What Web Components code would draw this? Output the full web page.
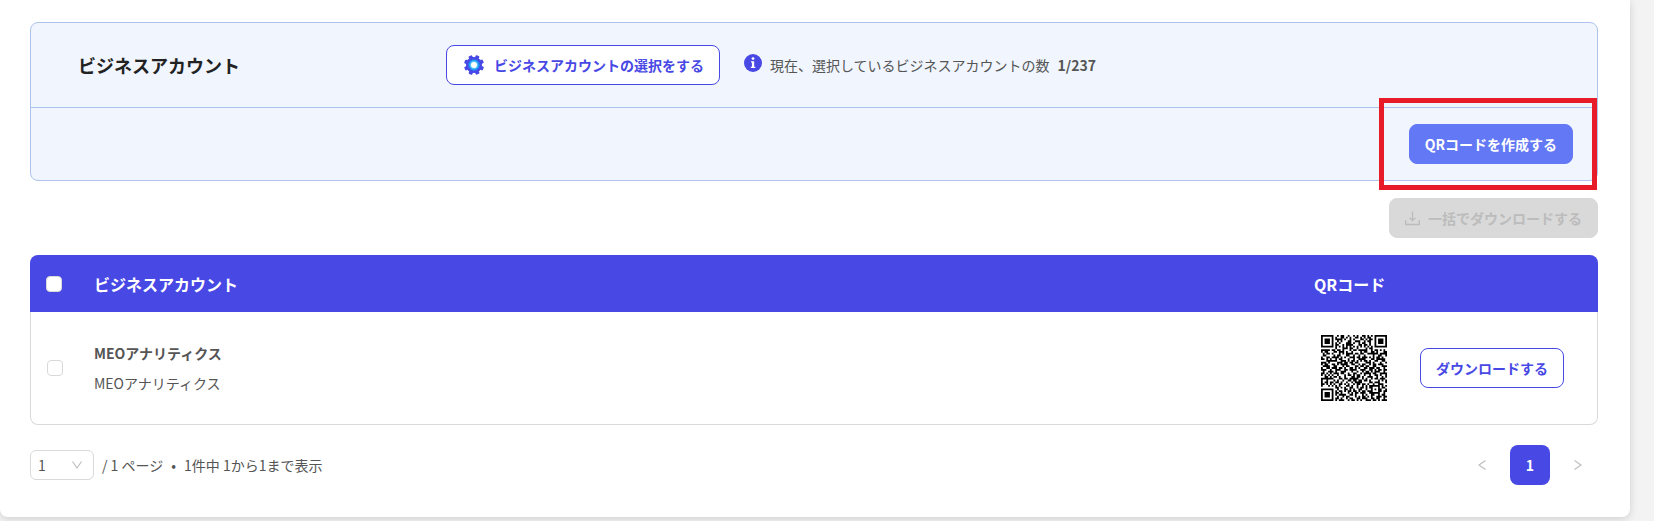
<!DOCTYPE html>
<html lang="ja">
<head>
<meta charset="utf-8">
<meta name="viewport" content="width=device-width, initial-scale=1">
<title>QRコード</title>
<style>
  :root {
    --primary: #4848e5;
    --primary-light: #6378f5;
    --panel: #f0f5fe;
    --panel-border: #adc3ec;
    --line: #d9d9d9;
    --text: #555;
    --heading: #222;
  }

  body {
    margin: 0;
    background: #f3f3f3;
    color: var(--text);
    font: 14px/22px "Noto Sans CJK JP", sans-serif;
  }
</style>
</head>
<body>
<qr-page></qr-page>

<script>
class AppButton extends HTMLElement {
  constructor() {
    super();
    this.attachShadow({ mode: "open" });
  }

  static get styles() {
    return /* css */`
      :host {
        display: inline-block;
      }

      button {
        display: flex;
        align-items: center;
        gap: 8px;
        height: 40px;
        padding: 0 15px;
        border: 1px solid var(--primary);
        border-radius: 8px;
        background: #fff;
        color: var(--primary);
        font: inherit;
        font-weight: 700;
        white-space: nowrap;
        cursor: pointer;
      }

      :host([kind="primary"]) button {
        border-color: var(--primary-light);
        background: var(--primary-light);
        color: #fff;
      }

      button:disabled {
        border-color: #d9d9d9;
        background: #d9d9d9;
        color: #bcbcbc;
        cursor: not-allowed;
      }
    `;
  }

  connectedCallback() {
    this.render();
    this.shadowRoot.querySelector("button").disabled = this.hasAttribute("disabled");
  }

  render() {
    this.shadowRoot.innerHTML = /* html */`
    <style>${AppButton.styles}</style>
    <button type="button"><slot name="icon"></slot><slot></slot></button>`;
  }
}

class AccountPanel extends HTMLElement {
  constructor() {
    super();
    this.attachShadow({ mode: "open" });
  }

  static get styles() {
    return /* css */`
      :host {
        display: block;
        border: 1px solid var(--panel-border);
        border-radius: 8px;
        background: var(--panel);
      }

      .top {
        display: grid;
        grid-template-columns: 368px 1fr;
        align-items: center;
        padding: 22px 24px 22px 47px;
      }

      h2 {
        margin: 0;
        color: var(--heading);
        font-size: 18px;
        font-weight: 700;
      }

      .choice {
        display: flex;
        align-items: center;
        gap: 24px;
      }

      .count {
        display: flex;
        align-items: center;
        gap: 8px;
      }

      .info {
        margin-bottom: 4px;
      }

      svg {
        display: block;
      }

      .actions {
        position: relative;
        display: flex;
        justify-content: flex-end;
        padding: 16px 24px;
        border-top: 1px solid var(--panel-border);
      }

      .mark {
        position: absolute;
        inset: -10px 0 -10px auto;
        width: 218px;
        box-sizing: border-box;
        border: 5px solid #e81c28;
        pointer-events: none;
      }
    `;
  }

  connectedCallback() {
    this.render();
  }

  render() {
    this.shadowRoot.innerHTML = /* html */`
    <style>${AccountPanel.styles}</style>
    <div class="top">
      <h2>ビジネスアカウント</h2>
      <div class="choice">
        <app-button>
          <svg slot="icon" width="24" height="24" viewBox="0 0 24 24" aria-hidden="true">
            <g fill="#4848e5">
              <circle cx="12" cy="12" r="8"/>
              <rect x="10" y="2" width="4" height="20" rx="1" transform="rotate(22 12 12)"/>
              <rect x="10" y="2" width="4" height="20" rx="1" transform="rotate(67 12 12)"/>
              <rect x="10" y="2" width="4" height="20" rx="1" transform="rotate(112 12 12)"/>
              <rect x="10" y="2" width="4" height="20" rx="1" transform="rotate(157 12 12)"/>
            </g>
            <circle cx="12" cy="12" r="5.8" fill="#1e88f5"/>
            <circle cx="12" cy="12" r="4.4" fill="#4fc3f7"/>
            <circle cx="12" cy="12" r="3" fill="#fff"/>
          </svg>
          ビジネスアカウントの選択をする
        </app-button>
        <div class="count">
          <svg class="info" width="18" height="18" viewBox="0 0 18 18" aria-hidden="true">
            <circle cx="9" cy="9" r="9" fill="#4848e5"/>
            <circle cx="9" cy="4.6" r="1.4" fill="#fff"/>
            <path d="M7 7.2h3.2v5.5h1.1V14H6.8v-1.3h1.1V8.5H7z" fill="#fff"/>
          </svg>
          <span>現在、選択しているビジネスアカウントの数</span>
          <b>1/237</b>
        </div>
      </div>
    </div>
    <div class="actions">
      <app-button kind="primary">QRコードを作成する</app-button>
      <div class="mark"></div>
    </div>`;
  }
}

class QrCode extends HTMLElement {
  constructor() {
    super();
    this.attachShadow({ mode: "open" });
  }

  static get rows() {
    return [
      "#######..#.##..#..#.#..##.#.#.#######",
      "#.....#.#..##.#.#..##.#.#.##..#.....#",
      "#.###.#.####.#..#.#...##.#.##.#.###.#",
      "#.###.#..#.#...##..###..#.##..#.###.#",
      "#.###.#.#.#...###.#..#.##..#..#.###.#",
      "#.....#.##..#.####...##.##.#..#.....#",
      "#######.#.#.#.#.#.#.#.#.#.#.#.#######",
      "........#...###.##..#....#.##........",
      "#####.##.##.#...#.##.#####..#.##.#.#.",
      "#.##...##.###.#..#....#.##..##.#...##",
      ".#.##.#...#.#.####.##.##..######.####",
      ".##....#.##...##..#..#..#....#..##..#",
      "#..##.####.#.#..###.##.###.#.#.##.#..",
      "##.#.#..#.##...#..#..####...##.#####.",
      "...######..###.#.##.#.#.##.#..##..##.",
      "###.#....###.##.##.##....###.#...#..#",
      "#.##..##.#.####..##..#.##..#.##.###..",
      ".####..##...#.##...##.##.##..##...###",
      "#..##.###.##.#..##.#.#..##.###.##..#.",
      "###..#..###..##.####..###..##.#.##.##",
      ".#..###.#..###...#..#..#.##.#.###..#.",
      "##.#.#.###.##..#..##..#.####.##..####",
      "#.#.#.#..#...#.##.#.##..#..#..##.#..#",
      "..##.#.##.#..#...##.##.#..###..#..#.#",
      "#######...##.##.#####..#.#..#.##.###.",
      "#..#...#.#..#..##.##.##.##.#....#.#.#",
      "#.##.##.##.#..#..#.####....##.###...#",
      "##.#.#.#..##.#.#..#.##.##.#..#..###..",
      "#...#.#.#.#...##.#..#..#.#.######.#.#",
      "........##.#.#..##..#.##.#.##...#.##.",
      "#######..#...##.#.#..##..#..#.#.##..#",
      "#.....#.#.##.#.##.##.#.##.###...##.##",
      "#.###.#.##.#...#.#.##.###..######..#.",
      "#.###.#.#.####..##.#...#.#..##..#.##.",
      "#.###.#..#..#.##...#.#.##.#.#..###.##",
      "#.....#.##.#..#.##..##.###..##.##..#.",
      "#######.#.###..#.##.#.#..###.##.#.###",
    ];
  }

  connectedCallback() {
    this.render();
  }

  render() {
    // one unit square per dark module
    const path = QrCode.rows
      .map((row, y) => [...row].map((c, x) => (c === "#" ? `M${x} ${y}h1v1h-1z` : "")).join(""))
      .join("");

    this.shadowRoot.innerHTML = /* html */`
    <style>
      :host {
        display: block;
      }

      svg {
        display: block;
        width: 66px;
        height: 66px;
        padding: 7px;
      }
    </style>
    <svg viewBox="0 0 37 37" role="img" aria-label="QRコード"><path d="${path}"/></svg>`;
  }
}

class AccountTable extends HTMLElement {
  constructor() {
    super();
    this.attachShadow({ mode: "open" });
  }

  static get styles() {
    return /* css */`
      :host {
        display: block;
      }

      table {
        width: 100%;
        border-spacing: 0;
        table-layout: fixed;
      }

      .check {
        width: 48px;
      }

      .qr {
        width: 106px;
      }

      .action {
        width: 194px;
      }

      th {
        height: 57px;
        padding: 0 16px;
        box-sizing: border-box;
        background: var(--primary);
        color: #fff;
        font-size: 16px;
        font-weight: 700;
        text-align: left;
        white-space: nowrap;
      }

      th:first-child {
        border-radius: 8px 0 0 0;
      }

      th:last-child {
        border-radius: 0 8px 0 0;
      }

      td {
        padding: 16px;
        border-bottom: 1px solid var(--line);
      }

      td:first-child {
        border-left: 1px solid var(--line);
        border-radius: 0 0 0 8px;
      }

      td:last-child {
        border-right: 1px solid var(--line);
        border-radius: 0 0 8px 0;
      }

      p {
        margin: 0;
        line-height: 30px;
      }

      .name {
        font-weight: 700;
      }

      input {
        display: block;
        appearance: none;
        width: 16px;
        height: 16px;
        margin: 0;
        border: 1px solid var(--line);
        border-radius: 4px;
        background: #fff;
      }

      input:checked {
        background: var(--primary);
      }

      app-button {
        display: block;
      }
    `;
  }

  connectedCallback() {
    this.render();
    this.init();
  }

  init() {
    const all = this.shadowRoot.querySelector("th input");
    const items = this.shadowRoot.querySelectorAll("td input");
    all.addEventListener("change", () => {
      items.forEach((item) => { item.checked = all.checked; });
    });
  }

  render() {
    this.shadowRoot.innerHTML = /* html */`
    <style>${AccountTable.styles}</style>
    <table>
      <thead>
        <tr>
          <th class="check"><input type="checkbox" aria-label="すべて選択"></th>
          <th>ビジネスアカウント</th>
          <th class="qr">QRコード</th>
          <th class="action"></th>
        </tr>
      </thead>
      <tbody>
        <tr>
          <td><input type="checkbox" aria-label="MEOアナリティクス"></td>
          <td>
            <p class="name">MEOアナリティクス</p>
            <p>MEOアナリティクス</p>
          </td>
          <td><qr-code></qr-code></td>
          <td><app-button>ダウンロードする</app-button></td>
        </tr>
      </tbody>
    </table>`;
  }
}

class PageNav extends HTMLElement {
  constructor() {
    super();
    this.attachShadow({ mode: "open" });
  }

  static get styles() {
    return /* css */`
      :host {
        display: flex;
        justify-content: space-between;
        align-items: center;
      }

      .summary,
      nav {
        display: flex;
        align-items: center;
        gap: 8px;
      }

      .select {
        display: grid;
        align-items: center;
      }

      .select > * {
        grid-area: 1 / 1;
      }

      select {
        appearance: none;
        width: 64px;
        height: 30px;
        padding: 0 7px;
        border: 1px solid var(--line);
        border-radius: 6px;
        background: #fff;
        color: inherit;
        font: inherit;
      }

      .select svg {
        justify-self: end;
        margin-right: 11px;
        pointer-events: none;
      }

      svg {
        display: block;
        fill: none;
        stroke: #bfbfbf;
        stroke-width: 1.2;
      }

      button {
        display: flex;
        justify-content: center;
        align-items: center;
        width: 40px;
        height: 40px;
        padding: 0;
        border: 0;
        border-radius: 8px;
        background: none;
        font: inherit;
        font-weight: 700;
      }

      .current {
        background: var(--primary);
        color: #fff;
      }
    `;
  }

  connectedCallback() {
    this.render();
  }

  render() {
    this.shadowRoot.innerHTML = /* html */`
    <style>${PageNav.styles}</style>
    <div class="summary">
      <div class="select">
        <select aria-label="ページ"><option>1</option></select>
        <svg width="12" height="10" viewBox="0 0 12 10"><path d="M1.5 1.5 6 8l4.5-6.5"/></svg>
      </div>
      <span>/ 1 ページ</span>
      <span>•</span>
      <span>1件中 1から1まで表示</span>
    </div>
    <nav aria-label="ページ送り">
      <button type="button" aria-label="前へ" disabled>
        <svg width="10" height="12" viewBox="0 0 10 12"><path d="M8.5 1.5 2 6l6.5 4.5"/></svg>
      </button>
      <button type="button" class="current" aria-current="page">1</button>
      <button type="button" aria-label="次へ" disabled>
        <svg width="10" height="12" viewBox="0 0 10 12"><path d="M1.5 1.5 8 6l-6.5 4.5"/></svg>
      </button>
    </nav>`;
  }
}

class QrPage extends HTMLElement {
  constructor() {
    super();
    this.attachShadow({ mode: "open" });
  }

  static get styles() {
    return /* css */`
      :host {
        display: block;
        margin: 0 24px 4px 0;
        padding: 22px 32px 32px 30px;
        border-radius: 0 0 8px 8px;
        background: #fff;
        box-shadow: 0 2px 8px rgba(0, 0, 0, 0.15);
      }

      .bulk {
        display: flex;
        justify-content: flex-end;
        margin: 17px 0;
      }

      page-nav {
        margin-top: 20px;
      }
    `;
  }

  connectedCallback() {
    this.render();
  }

  render() {
    this.shadowRoot.innerHTML = /* html */`
    <style>${QrPage.styles}</style>
    <account-panel></account-panel>
    <div class="bulk">
      <app-button disabled>
        <svg slot="icon" width="15" height="15" viewBox="0 0 15 15" fill="none" stroke="#bcbcbc" stroke-width="1.3" aria-hidden="true">
          <path d="M7.5 .5v9M4.5 6.7l3 3 3-3M.7 9v4.5h13.6V9"/>
        </svg>
        一括でダウンロードする
      </app-button>
    </div>
    <account-table></account-table>
    <page-nav></page-nav>`;
  }
}

customElements.define("app-button", AppButton);
customElements.define("account-panel", AccountPanel);
customElements.define("qr-code", QrCode);
customElements.define("account-table", AccountTable);
customElements.define("page-nav", PageNav);
customElements.define("qr-page", QrPage);
</script>
</body>
</html>
